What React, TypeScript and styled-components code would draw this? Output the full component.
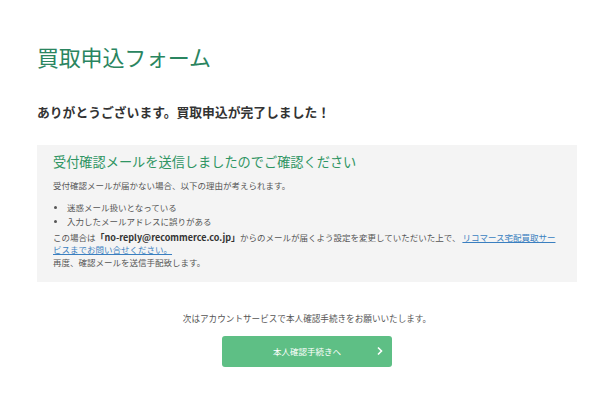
import React from 'react';
import styled, { createGlobalStyle } from 'styled-components';

const GlobalStyle = createGlobalStyle`
  body {
    margin: 0;
    background: #ffffff;
    font-family: "Noto Sans CJK JP", "Noto Sans", sans-serif;
    color: #444;
  }
`;

const Page = styled.div`
  padding: 40px 23px 0 37px;
`;

const Title = styled.h1`
  margin: 0;
  font-size: 22px;
  line-height: 32px;
  font-weight: 400;
  color: #2a8560;
  letter-spacing: -0.2px;
`;

const Heading = styled.h2`
  margin: 30px 0 0;
  font-size: 12.8px;
  line-height: 20px;
  font-weight: 700;
  color: #333;
`;

const NoticeBox = styled.section`
  margin-top: 23px;
  background: #f4f4f4;
  padding: 7px 16px 13px;
`;

const NoticeTitle = styled.h3`
  margin: 0;
  font-size: 13.2px;
  line-height: 20px;
  font-weight: 400;
  color: #2f9563;
`;

const Text = styled.p<{ $gap?: number }>`
  margin: ${p => p.$gap ?? 0}px 0 0;
  font-size: 8.5px;
  line-height: 12.7px;
  color: #555;
`;

const BulletList = styled.ul`
  margin: 8px 0 0;
  padding: 0 0 0 14px;
  font-size: 8.5px;
  line-height: 14px;
  color: #555;

  li::marker {
    font-size: 8px;
  }
`;

const Strong = styled.strong`
  font-weight: 700;
  color: #333;
  font-size: 9px;
  line-height: 1;
`;

const Link = styled.a`
  color: #3a7fc0;
  text-decoration: underline;
`;

const Footer = styled.div`
  display: flex;
  flex-direction: column;
  align-items: center;
  margin-top: 30px;
`;

const NextText = styled.p`
  margin: 0;
  font-size: 8.6px;
  line-height: 13px;
  color: #555;
`;

const ActionButton = styled.button`
  position: relative;
  margin-top: 11px;
  width: 170px;
  height: 31px;
  border: none;
  border-radius: 3px;
  background: #5ebf85;
  color: #fff;
  font-family: inherit;
  font-size: 8.5px;
  cursor: pointer;
`;

const Chevron = styled.svg`
  position: absolute;
  right: 8px;
  top: 50%;
  transform: translateY(-50%);
`;

export default function App() {
  return (
    <>
      <GlobalStyle />
      <Page>
        <Title>買取申込フォーム</Title>
        <Heading>ありがとうございます。買取申込が完了しました！</Heading>
        <NoticeBox>
          <NoticeTitle>受付確認メールを送信しましたのでご確認ください</NoticeTitle>
          <Text $gap={7}>受付確認メールが届かない場合、以下の理由が考えられます。</Text>
          <BulletList>
            <li>迷惑メール扱いとなっている</li>
            <li>入力したメールアドレスに誤りがある</li>
          </BulletList>
          <Text $gap={3}>
            この場合は<Strong>「no-reply@recommerce.co.jp」</Strong>からのメールが届くよう設定を変更していただいた上で、 <Link href="#">リコマース宅配買取サービスまでお問い合せください。</Link>
            <br />
            再度、確認メールを送信手配致します。
          </Text>
        </NoticeBox>
        <Footer>
          <NextText>次はアカウントサービスで本人確認手続きをお願いいたします。</NextText>
          <ActionButton>
            本人確認手続きへ
            <Chevron width="8" height="10" viewBox="0 0 8 10" fill="none">
              <path d="M2 1.5 L5.5 5 L2 8.5" stroke="#fff" strokeWidth="1.6" />
            </Chevron>
          </ActionButton>
        </Footer>
      </Page>
    </>
  );
}
